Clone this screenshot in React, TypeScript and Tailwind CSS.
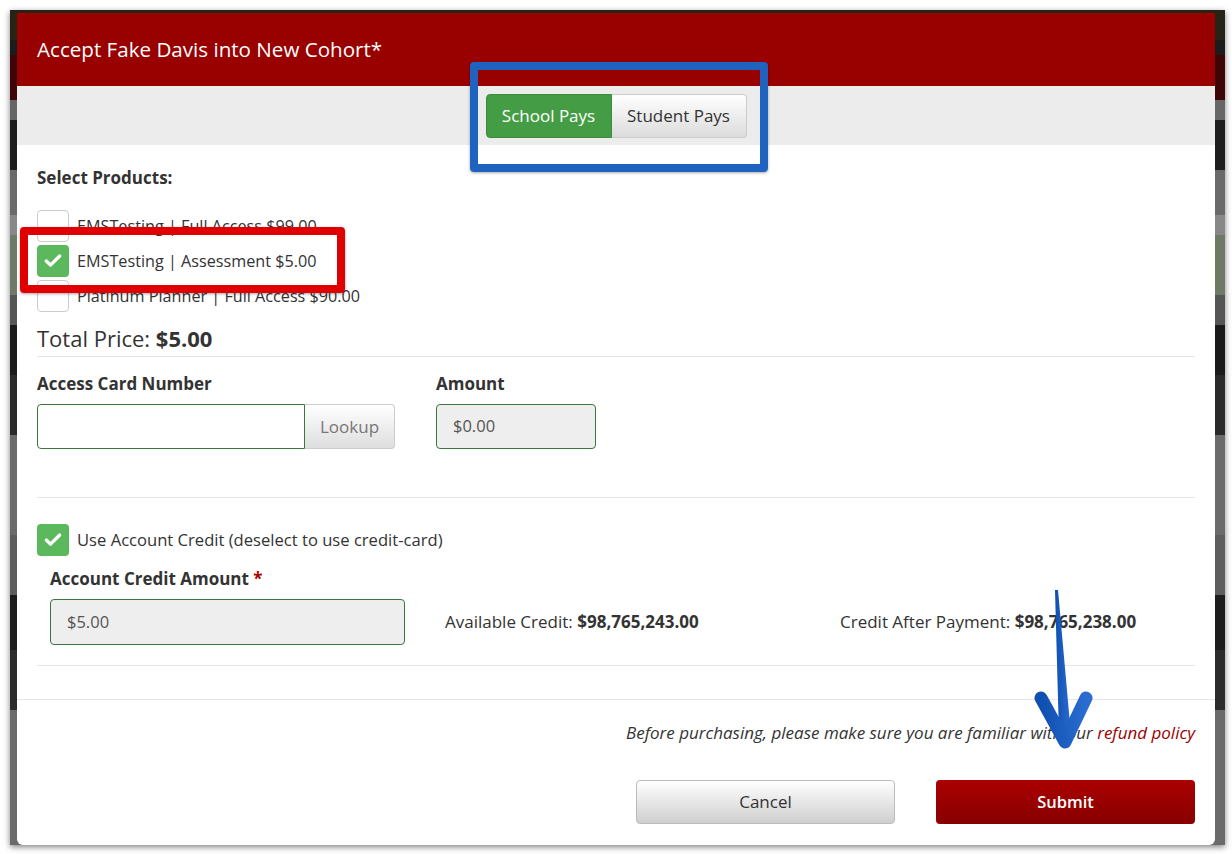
import { Check } from 'lucide-react';

const font = { fontFamily: '"Open Sans", "Liberation Sans", sans-serif' };

function Box({ checked }: { checked?: boolean }) {
  return checked ? (
    <span className="w-8 h-8 rounded bg-[#5cb85c] flex items-center justify-center shrink-0">
      <Check className="w-5 h-5 text-white" strokeWidth={4} />
    </span>
  ) : (
    <span className="w-8 h-8 rounded border border-[#ccc] bg-white shrink-0" />
  );
}

const BANDS = [
  { h: 'h-[30px]', c: 'bg-[#262416]' },
  { h: 'h-[15px]', c: 'bg-[#1c1c1c]' },
  { h: 'h-[45px]', c: 'bg-[#3d0505]' },
  { h: 'h-[20px]', c: 'bg-[#666]' },
  { h: 'h-[50px]', c: 'bg-[#1e1e1e]' },
  { h: 'h-[45px]', c: 'bg-[#6a6a6a]' },
  { h: 'h-[20px]', c: 'bg-[#888]' },
  { h: 'h-[60px]', c: 'bg-[#6f7a66]' },
  { h: 'h-[30px]', c: 'bg-[#555]' },
  { h: 'h-[50px]', c: 'bg-[#1a1a1a]' },
  { h: 'h-[60px]', c: 'bg-[#2a2a2a]' },
  { h: 'h-[100px]', c: 'bg-[#6b6b6b]' },
  { h: 'h-[60px]', c: 'bg-[#5e5e5e]' },
  { h: 'h-[55px]', c: 'bg-[#1d1d1d]' },
  { h: 'h-[60px]', c: 'bg-[#2c2c2c]' },
  { h: 'h-[135px]', c: 'bg-[#6a6a6a]' },
];

export default function App() {
  return (
    <div className="w-[1232px] h-[854px] bg-white relative overflow-hidden text-[#333]" style={font}>
      {/* page behind the modal */}
      <div className="ml-[10px] mt-[10px] w-[1215px] h-[835px] flex flex-col overflow-hidden shadow-[0_2px_6px_rgba(0,0,0,0.5)]">
        {BANDS.map((b, i) => (
          <div key={i} className={`${b.h} ${b.c} shrink-0`} />
        ))}
      </div>

      {/* modal */}
      <div className="absolute left-[17px] top-[13px] w-[1198px] h-[832px] bg-white rounded-b-md flex flex-col">
        <div className="h-[73px] bg-[#990000] px-5 flex items-center">
          <h1 className="text-white text-[20.6px] leading-none">Accept Fake Davis into New Cohort*</h1>
        </div>
        <div className="h-[59px] bg-[#ececec] flex items-center justify-center">
          <div className="flex h-[44px]">
            <button className="w-[126px] rounded-l bg-[#449d44] border border-[#3d8b3d] text-white text-[17px]">School Pays</button>
            <button className="w-[135px] rounded-r bg-gradient-to-b from-white to-[#dcdcdc] border border-[#ccc] border-l-0 text-[#333] text-[17px]">Student Pays</button>
          </div>
        </div>

        <div className="px-5 pt-[23px]">
          <div className="font-bold text-[17px] leading-5">Select Products:</div>
          <div className="mt-[22px] flex flex-col">
            {[
              { t: 'EMSTesting | Full Access $99.00', c: false },
              { t: 'EMSTesting | Assessment $5.00', c: true },
              { t: 'Platinum Planner | Full Access $90.00', c: false },
            ].map((p) => (
              <div key={p.t} className="h-[35px] flex items-start gap-2">
                <Box checked={p.c} />
                <span className="text-[16.2px] leading-8">{p.t}</span>
              </div>
            ))}
          </div>
          <div className="mt-[9px] pb-[4px] border-b border-[#e5e5e5] text-[22px] leading-7">
            Total Price: <span className="font-bold">$5.00</span>
          </div>

          <div className="pt-[17px] flex gap-[41px] pb-[48px] border-b border-[#e5e5e5]">
            <div>
              <div className="font-bold text-[17px] leading-5">Access Card Number</div>
              <div className="mt-[10px] flex h-[45px]">
                <div className="w-[268px] border border-[#3c763d] rounded-l bg-white" />
                <button className="w-[90px] rounded-r border border-[#ccc] border-l-0 bg-gradient-to-b from-white to-[#dedede] text-[#777] text-[17px]">Lookup</button>
              </div>
            </div>
            <div>
              <div className="font-bold text-[17px] leading-5">Amount</div>
              <div className="mt-[10px] w-[160px] h-[45px] rounded border border-[#3c763d] bg-[#eee] flex items-center px-4 text-[16.5px] text-[#555]">$0.00</div>
            </div>
          </div>

          <div className="pt-[26px] pb-[20px] border-b border-[#e5e5e5]">
            <div className="flex items-center gap-2">
              <Box checked />
              <span className="text-[16.6px]">Use Account Credit (deselect to use credit-card)</span>
            </div>
            <div className="pl-[13px] mt-[13px] font-bold text-[17px] leading-5">
              Account Credit Amount <span className="text-[#a00]">*</span>
            </div>
            <div className="mt-[10px] flex items-center">
              <div className="ml-[13px] w-[355px] h-[46px] rounded border border-[#3c763d] bg-[#eee] flex items-center px-4 text-[16.5px] text-[#555]">$5.00</div>
              <div className="ml-[40px] w-[395px] text-[17px]">Available Credit: <span className="font-bold">$98,765,243.00</span></div>
              <div className="text-[17px]">Credit After Payment: <span className="font-bold">$98,765,238.00</span></div>
            </div>
          </div>
        </div>

        <div className="mt-[33px] border-t border-[#e5e5e5] px-5 pt-[23px]">
          <p className="text-right italic text-[17px] leading-5">
            Before purchasing, please make sure you are familiar with our <span className="text-[#990000]">refund policy</span>
          </p>
          <div className="mt-[37px] flex justify-end gap-[41px]">
            <button className="w-[259px] h-[44px] rounded border border-[#bbb] bg-gradient-to-b from-white to-[#cfcfcf] text-[#333] text-[17px]">Cancel</button>
            <button className="w-[259px] h-[44px] rounded bg-gradient-to-b from-[#aa0000] to-[#880000] text-white text-[16.5px] font-semibold">Submit</button>
          </div>
        </div>
      </div>

      {/* annotations */}
      <div className="absolute left-[470px] top-[62px] w-[298px] h-[110px] border-[8px] border-[#2062c0] rounded shadow-[0_1px_3px_rgba(0,0,0,0.35)]" />
      <div className="absolute left-[20px] top-[227px] w-[325px] h-[66px] border-[8px] border-[#e00000] rounded shadow-[0_1px_3px_rgba(0,0,0,0.35)]" />
      <svg className="absolute left-[1030px] top-[585px]" width="64" height="168" viewBox="0 0 64 168">
        <defs>
          <linearGradient id="arrowG" x1="0" y1="0" x2="1" y2="0">
            <stop offset="0%" stopColor="#0f4fb0" />
            <stop offset="100%" stopColor="#2a6cd0" />
          </linearGradient>
        </defs>
        <polygon points="25,5 28,5 41,150 29,150" fill="url(#arrowG)" />
        <path d="M11,113 L35,157 L56,113" fill="none" stroke="url(#arrowG)" strokeWidth="13" strokeLinecap="round" strokeLinejoin="round" />
      </svg>
    </div>
  );
}
